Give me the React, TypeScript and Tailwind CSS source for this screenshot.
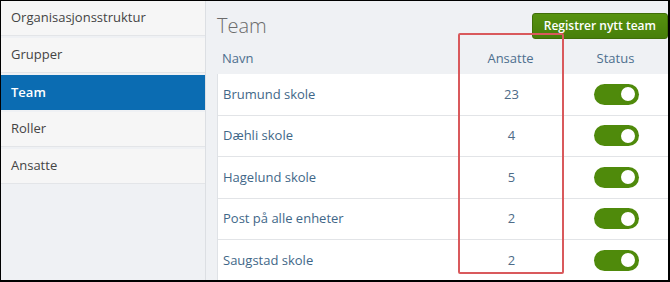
const menu = ["Organisasjonsstruktur", "Grupper", "Team", "Roller", "Ansatte"];

const teams = [
  { name: "Brumund skole", count: 23 },
  { name: "Dæhli skole", count: 4 },
  { name: "Hagelund skole", count: 5 },
  { name: "Post på alle enheter", count: 2 },
  { name: "Saugstad skole", count: 2 },
];

function Toggle() {
  return (
    <div className="flex h-[21px] w-[45px] items-center justify-end rounded-full bg-[#4f8a0b] pr-[2px]">
      <div className="h-[18px] w-[18px] rounded-full border-2 border-[#4f8a0b] bg-white" />
    </div>
  );
}

export default function App() {
  return (
    <div
      className="flex h-[282px] w-[670px] overflow-hidden border-t border-l border-r-2 border-b-2 border-black bg-[#eff1f4] text-[13px]"
      style={{ fontFamily: '"Open Sans", "Noto Sans", sans-serif' }}
    >
      {/* sidebar */}
      <aside className="flex w-[205px] shrink-0 flex-col gap-[2px] border-r border-[#dcdfe3] bg-[#eff1f4]">
        {menu.map((item) =>
          item === "Team" ? (
            <div
              key={item}
              className="flex h-[35px] items-center bg-[#0b6cb2] pl-[10px] font-semibold text-white"
            >
              {item}
            </div>
          ) : (
            <div
              key={item}
              className="flex h-[35px] items-center border-b border-[#e3e5e8] bg-[#f6f6f6] pl-[10px] text-[#444]"
            >
              {item}
            </div>
          )
        )}
      </aside>

      {/* main */}
      <main className="relative flex-1 pl-[11px]">
        <div className="flex h-[48px] items-center justify-between pt-[2px]">
          <h1 className="text-[20px] font-light text-[#6b6b6b]">Team</h1>
          <button className="h-[26px] whitespace-nowrap rounded-[3px] border border-[#3f6e08] bg-gradient-to-b from-[#56920f] to-[#477f0a] px-[11px] text-[12px] font-semibold text-white">
            Registrer nytt team
          </button>
        </div>

        <div className="grid h-[25px] grid-cols-[241px_105px_1fr] items-center pb-[5px] text-[#4d6f8e]">
          <span className="pl-[5px]">Navn</span>
          <span className="text-center">Ansatte</span>
          <span className="text-center">Status</span>
        </div>

        <div className="border-l border-[#dfe2e6] bg-white">
          {teams.map((t) => (
            <div
              key={t.name}
              className="grid h-[41.5px] grid-cols-[241px_105px_1fr] items-center border-b border-[#e2e4e7] text-[#3f6788]"
            >
              <span className="pl-[5px]">{t.name}</span>
              <span className="text-center text-[#4e6b88]">{t.count}</span>
              <span className="flex justify-center">
                <Toggle />
              </span>
            </div>
          ))}
        </div>

        {/* highlight box */}
        <div className="absolute top-[32px] left-[252px] h-[241px] w-[106px] rounded-[2px] border-2 border-[#d9595c]" />
      </main>
    </div>
  );
}
